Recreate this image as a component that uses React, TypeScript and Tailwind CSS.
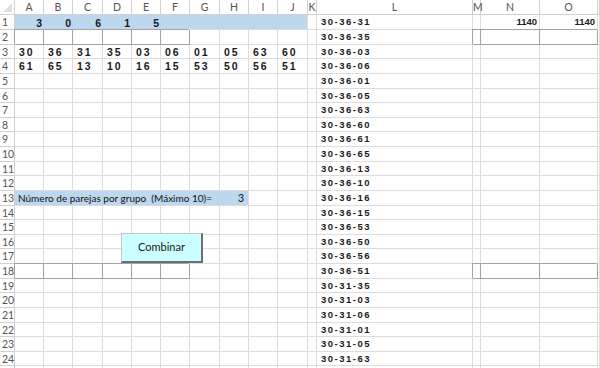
import clsx from "clsx";

const COLS = ["A", "B", "C", "D", "E", "F", "G", "H", "I", "J", "K", "L", "M", "N", "O", ""];
const ROW3 = ["30", "36", "31", "35", "03", "06", "01", "05", "63", "60"];
const ROW4 = ["61", "65", "13", "10", "16", "15", "53", "50", "56", "51"];
const TOP = ["3", "0", "6", "1", "5"];
const TOP_W = ["w-[29px]", "w-[29px]", "w-[30px]", "w-[29px]", "w-[29px]"];

const LIST = [
  "30-36-31", "30-36-35", "30-36-03", "30-36-06", "30-36-01", "30-36-05",
  "30-36-63", "30-36-60", "30-36-61", "30-36-65", "30-36-13", "30-36-10",
  "30-36-16", "30-36-15", "30-36-53", "30-36-50", "30-36-56", "30-36-51",
  "30-31-35", "30-31-03", "30-31-06", "30-31-01", "30-31-05", "30-31-63",
];

const ui = "font-['Lato','Liberation_Sans',sans-serif]";
const num = "font-['Liberation_Sans',Arial,sans-serif] font-bold text-[#1a1a1a]";

function Cell({ className, children }: { className?: string; children?: React.ReactNode }) {
  return (
    <div
      className={clsx(
        "border-r border-b border-[#dcdcdc] overflow-hidden whitespace-nowrap leading-[14px]",
        className
      )}
    >
      {children}
    </div>
  );
}

// cells with a thin gray box around them (rows 2 and 18)
const boxed = "!border-[#a3a3a3] shadow-[-1px_-1px_0_#a3a3a3]";

function dataRow(r: number) {
  const cells: React.ReactNode[] = [];

  if (r === 1) {
    cells.push(
      <Cell key="span" className="col-span-10 bg-[#bdd7ee] flex">
        {TOP.map((d, i) => (
          <span key={i} className={clsx(TOP_W[i], num, "text-[10.5px] text-right pr-[2px] pt-[1px]")}>
            {d}
          </span>
        ))}
      </Cell>
    );
  } else if (r === 13) {
    cells.push(
      <Cell key="span" className={clsx("col-span-8 bg-[#bdd7ee] flex justify-between pl-[3px] pr-[4px] text-[10px] text-[#111]", ui)}>
        <span className="whitespace-pre">Número de parejas por grupo  (Máximo 10)=</span>
        <span className="text-[10.5px]">3</span>
      </Cell>
    );
  }

  const start = r === 1 ? 10 : r === 13 ? 8 : 0;
  for (let c = start; c < 16; c++) {
    const col = COLS[c];
    const isBox =
      (r === 2 || r === 18) && (c <= 5 || col === "M" || col === "N" || col === "O");
    let content: React.ReactNode = null;
    let extra = "";

    if ((r === 3 || r === 4) && c < 10) {
      content = (r === 3 ? ROW3 : ROW4)[c];
      extra = clsx(num, "text-[10.5px] tracking-[2px] pl-[4px]");
    } else if (col === "L" && LIST[r - 1]) {
      content = LIST[r - 1];
      extra = clsx(num, "text-[9.5px] tracking-[1.5px] pl-[4px]");
    } else if (r === 1 && (col === "N" || col === "O")) {
      content = "1140";
      extra = clsx(num, "text-[9.5px] text-right pr-[2px]");
    }

    cells.push(
      <Cell key={c} className={clsx(isBox && boxed, extra)}>
        {content}
      </Cell>
    );
  }
  return cells;
}

export default function App() {
  const rows = Array.from({ length: 25 }, (_, i) => i + 1);

  return (
    <div className="relative w-[600px] h-[368px] overflow-hidden bg-white">
      <div
        className={clsx(
          "grid grid-cols-[15px_29px_29px_30px_29px_29px_29px_30px_29px_29px_30px_9px_156px_8px_59px_58px_1fr]",
          "grid-rows-[15px_15px_15px_14px_15px_15px_14px_15px_14px_15px_15px_14px_15px_15px_14px_15px_14px_15px_15px_14px_15px_15px_14px_15px_14px_14px]"
        )}
      >
        {/* corner */}
        <div className="relative border-r border-b border-[#d0d0d0]">
          <svg className="absolute right-[2px] bottom-[2px]" width="9" height="9" viewBox="0 0 9 9">
            <polygon points="9,0 9,9 0,9" fill="#dfdfdf" />
          </svg>
        </div>
        {COLS.map((c, i) => (
          <div
            key={i}
            className={clsx(
              "border-r border-b border-[#d0d0d0] text-center text-[10.5px] leading-[15px] text-[#555]",
              ui
            )}
          >
            {c}
          </div>
        ))}

        {rows.map((r) => [
          <div
            key={`h${r}`}
            className={clsx(
              "border-r border-b border-[#d0d0d0] text-[10.5px] leading-[14px] text-[#555] pl-[2px]",
              ui
            )}
          >
            {r <= 24 ? r : null}
          </div>,
          ...dataRow(r),
        ])}
      </div>

      {/* form button over the sheet */}
      <button
        type="button"
        className={clsx(
          "absolute left-[121px] top-[233px] w-[82px] h-[30px] bg-[#ccffff] border border-[#c4c4c4] border-r-2 border-b-2 border-r-[#6e6e6e] border-b-[#6e6e6e] text-[11px] text-[#1a1a1a]",
          ui
        )}
      >
        Combinar
      </button>
    </div>
  );
}
